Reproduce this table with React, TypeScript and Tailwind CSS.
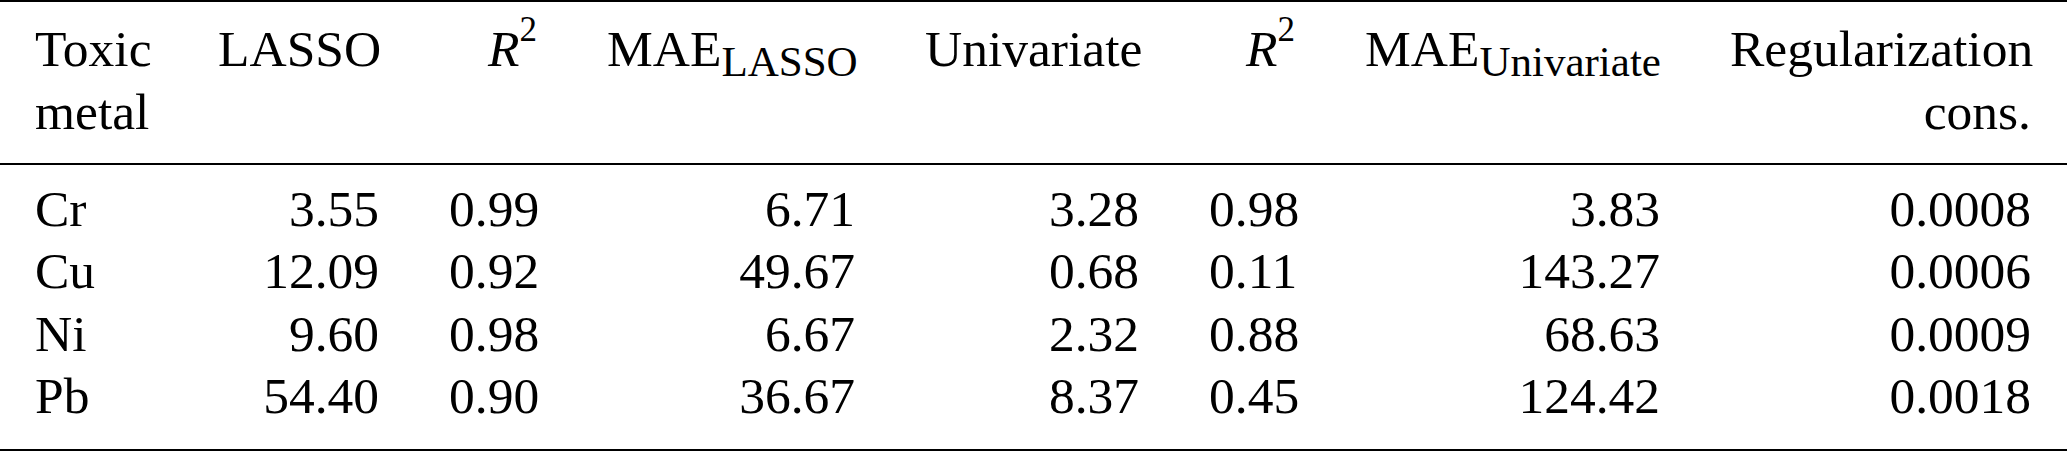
const rows = [
  ["Cr", "3.55", "0.99", "6.71", "3.28", "0.98", "3.83", "0.0008"],
  ["Cu", "12.09", "0.92", "49.67", "0.68", "0.11", "143.27", "0.0006"],
  ["Ni", "9.60", "0.98", "6.67", "2.32", "0.88", "68.63", "0.0009"],
  ["Pb", "54.40", "0.90", "36.67", "8.37", "0.45", "124.42", "0.0018"],
];

const grid =
  "grid grid-cols-[183px_231px_158px_318px_284px_156px_365px_371px]";

function RSquared() {
  return (
    <span className="whitespace-nowrap">
      <i>R</i>
      <span className="relative -top-[25px] text-[35px]">2</span>
    </span>
  );
}

function Mae({ sub }: { sub: string }) {
  return (
    <span className="whitespace-nowrap">
      MAE<span className="relative top-[10px] text-[43px]">{sub}</span>
    </span>
  );
}

export default function App() {
  return (
    <div className="w-[2067px] h-[451px] bg-white text-black font-['Liberation_Serif','Times_New_Roman',serif] text-[51.5px]">
      <div className="border-t-2 border-black" />
      <div className={`${grid} pt-[15px] pb-[20px] leading-[63px]`}>
        <div className="pl-[35px] pr-[35px]">
          Toxic
          <br />
          metal
        </div>
        <div className="px-[35px] text-right">LASSO</div>
        <div className="px-[35px] text-right">
          <RSquared />
        </div>
        <div className="px-[35px] text-right">
          <Mae sub="LASSO" />
        </div>
        <div className="px-[35px] text-right">Univariate</div>
        <div className="px-[35px] text-right">
          <RSquared />
        </div>
        <div className="px-[35px] text-right">
          <Mae sub="Univariate" />
        </div>
        <div className="px-[35px] text-right">
          Regularization
          <br />
          cons.
        </div>
      </div>
      <div className="border-t-2 border-black" />
      <div className="pt-[13px] pb-[22px] leading-[62.3px]">
        {rows.map((r) => (
          <div key={r[0]} className={grid}>
            {r.map((v, i) => (
              <div
                key={i}
                className={i === 0 ? "pl-[35px] pr-[35px]" : "px-[35px] text-right"}
              >
                {v}
              </div>
            ))}
          </div>
        ))}
      </div>
      <div className="border-t-[3px] border-black" />
    </div>
  );
}
